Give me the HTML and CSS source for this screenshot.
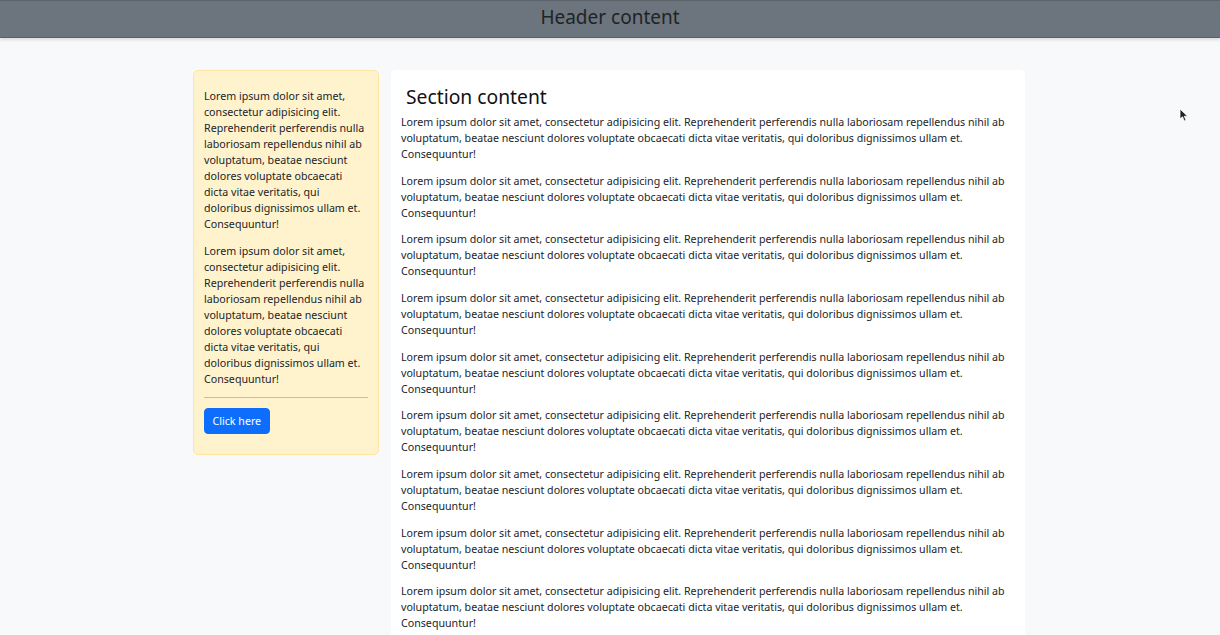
FILE: index.html
```html
<!DOCTYPE html>
<html lang="en">
<head>
<meta charset="utf-8">
<title>Layout</title>
<link rel="stylesheet" href="styles.css">
</head>
<body>
<header class="site-header">Header content</header>
<div class="container">
  <aside class="side-card">
    <p>Lorem ipsum dolor sit amet, consectetur adipisicing elit. Reprehenderit perferendis nulla laboriosam repellendus nihil ab voluptatum, beatae nesciunt dolores voluptate obcaecati dicta vitae veritatis, qui doloribus dignissimos ullam et. Consequuntur!</p>
    <p>Lorem ipsum dolor sit amet, consectetur adipisicing elit. Reprehenderit perferendis nulla laboriosam repellendus nihil ab voluptatum, beatae nesciunt dolores voluptate obcaecati dicta vitae veritatis, qui doloribus dignissimos ullam et. Consequuntur!</p>
    <hr class="divider">
    <button class="btn-primary" type="button">Click here</button>
  </aside>
  <main class="main-card">
    <h2 class="section-title">Section content</h2>
    <p>Lorem ipsum dolor sit amet, consectetur adipisicing elit. Reprehenderit perferendis nulla laboriosam repellendus nihil ab voluptatum, beatae nesciunt dolores voluptate obcaecati dicta vitae veritatis, qui doloribus dignissimos ullam et. Consequuntur!</p>
    <p>Lorem ipsum dolor sit amet, consectetur adipisicing elit. Reprehenderit perferendis nulla laboriosam repellendus nihil ab voluptatum, beatae nesciunt dolores voluptate obcaecati dicta vitae veritatis, qui doloribus dignissimos ullam et. Consequuntur!</p>
    <p>Lorem ipsum dolor sit amet, consectetur adipisicing elit. Reprehenderit perferendis nulla laboriosam repellendus nihil ab voluptatum, beatae nesciunt dolores voluptate obcaecati dicta vitae veritatis, qui doloribus dignissimos ullam et. Consequuntur!</p>
    <p>Lorem ipsum dolor sit amet, consectetur adipisicing elit. Reprehenderit perferendis nulla laboriosam repellendus nihil ab voluptatum, beatae nesciunt dolores voluptate obcaecati dicta vitae veritatis, qui doloribus dignissimos ullam et. Consequuntur!</p>
    <p>Lorem ipsum dolor sit amet, consectetur adipisicing elit. Reprehenderit perferendis nulla laboriosam repellendus nihil ab voluptatum, beatae nesciunt dolores voluptate obcaecati dicta vitae veritatis, qui doloribus dignissimos ullam et. Consequuntur!</p>
    <p>Lorem ipsum dolor sit amet, consectetur adipisicing elit. Reprehenderit perferendis nulla laboriosam repellendus nihil ab voluptatum, beatae nesciunt dolores voluptate obcaecati dicta vitae veritatis, qui doloribus dignissimos ullam et. Consequuntur!</p>
    <p>Lorem ipsum dolor sit amet, consectetur adipisicing elit. Reprehenderit perferendis nulla laboriosam repellendus nihil ab voluptatum, beatae nesciunt dolores voluptate obcaecati dicta vitae veritatis, qui doloribus dignissimos ullam et. Consequuntur!</p>
    <p>Lorem ipsum dolor sit amet, consectetur adipisicing elit. Reprehenderit perferendis nulla laboriosam repellendus nihil ab voluptatum, beatae nesciunt dolores voluptate obcaecati dicta vitae veritatis, qui doloribus dignissimos ullam et. Consequuntur!</p>
    <p>Lorem ipsum dolor sit amet, consectetur adipisicing elit. Reprehenderit perferendis nulla laboriosam repellendus nihil ab voluptatum, beatae nesciunt dolores voluptate obcaecati dicta vitae veritatis, qui doloribus dignissimos ullam et. Consequuntur!</p>
  </main>
</div>
<svg class="cursor" width="10" height="15" viewBox="0 0 10 15" aria-hidden="true"><path d="M1 1 L1 11 L3.5 8.8 L5.3 13 L7 12.2 L5.3 8.2 L8.6 8.2 Z" fill="#222" stroke="#fff" stroke-width="0.8"/></svg>
</body>
</html>
```
FILE: styles.css
```css
html, body {
  margin: 0;
  padding: 0;
}
body {
  background: #f8f9fa;
  font-family: "Noto Sans", "Open Sans", sans-serif;
  font-size: 10.67px;
  line-height: 16px;
  color: #212529;
  height: 635px;
  overflow: hidden;
}
.site-header {
  height: 36px;
  background: #6c757d;
  border-top: 1px solid #5c636a;
  border-bottom: 1px solid #5a6168;
  box-shadow: 0 2px 3px rgba(0, 0, 0, 0.12);
  text-align: center;
  font-size: 19px;
  line-height: 33px;
  color: #1f2326;
}
.container {
  width: 832px;
  padding-right: 2px;
  margin: 32px auto 0;
  display: flex;
  align-items: flex-start;
  gap: 12px;
}
.side-card {
  width: 164px;
  flex: none;
  background: #fff3cd;
  border: 1px solid #ffe69c;
  border-radius: 5px;
  padding: 17px 10px 20px;
}
.side-card p {
  margin: 0 0 10.67px;
}
.divider {
  margin: 0 0 10px;
  border: 0;
  border-top: 1px solid #c9bd9a;
}
.btn-primary {
  font-family: inherit;
  font-size: 10.67px;
  line-height: 16px;
  color: #fff;
  background: #0d6efd;
  border: 1px solid #0d6efd;
  border-radius: 4px;
  padding: 4px 7.5px;
  height: 26px;
  cursor: pointer;
}
.main-card {
  flex: 1;
  background: #fff;
  border-radius: 5px;
  padding: 15px 10px 0;
  min-height: 600px;
}
.section-title {
  margin: 0 0 5px;
  padding-left: 5px;
  font-size: 19.3px;
  font-weight: 400;
  line-height: 24px;
  color: #111;
}
.main-card p {
  margin: 0 0 10.67px;
}
.cursor {
  position: absolute;
  left: 1179px;
  top: 108px;
}
```
